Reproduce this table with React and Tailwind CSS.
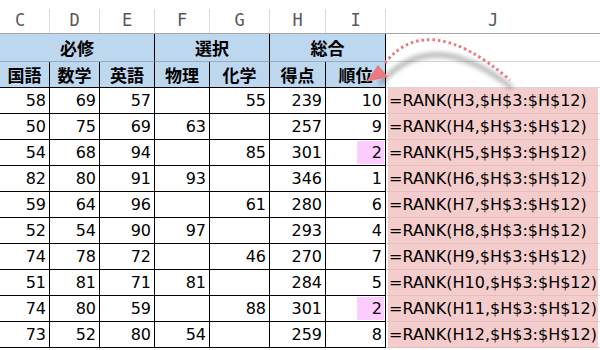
import React from 'react';

const widths = [50, 50, 55, 55, 60, 56, 60];
const letters = ['C', 'D', 'E', 'F', 'G', 'H', 'I'];
const subjects = ['国語', '数学', '英語', '物理', '化学', '得点', '順位'];

const rows = [
  [58, 69, 57, '', 55, 239, 10],
  [50, 75, 69, 63, '', 257, 9],
  [54, 68, 94, '', 85, 301, 2],
  [82, 80, 91, 93, '', 346, 1],
  [59, 64, 96, '', 61, 280, 6],
  [52, 54, 90, 97, '', 293, 4],
  [74, 78, 72, '', 46, 270, 7],
  [51, 81, 71, 81, '', 284, 5],
  [74, 80, 59, '', 88, 301, 2],
  [73, 52, 80, 54, '', 259, 8],
];

const jp = { fontFamily: '"Noto Sans CJK JP", "Noto Sans", sans-serif' };
const num = { fontFamily: '"DejaVu Sans", Verdana, sans-serif' };
const mono = { fontFamily: '"DejaVu Sans Mono", monospace' };

// pink block in column J with its own gridline
const JCell = ({ children }) => (
  <div className="flex flex-1 h-full">
    <div className="w-[2px] border-b border-[#d9d9d9]" />
    <div
      className="w-[210px] flex items-center whitespace-nowrap text-[16px] leading-none text-black pl-px bg-[#f4cccc] border-b border-[#e2c0c0]"
      style={num}
    >
      {children}
    </div>
    <div className="flex-1 border-b border-[#d9d9d9]" />
  </div>
);

export default function App() {
  return (
    <div className="relative w-[600px] h-[350px] bg-white overflow-hidden">
      {/* column letters */}
      <div className="flex h-[34px] border-b border-[#a6a6a6]">
        {letters.map((l, i) => (
          <div key={l} className="flex h-full" style={{ width: widths[i] }}>
            <div
              className={`flex-1 flex items-center justify-center pt-[8px] text-[17px] text-[#595959] ${i === 0 ? 'pr-[9px]' : ''}`}
              style={mono}
            >
              {l}
            </div>
            <div className="w-px mt-[9px] bg-[#d9d9d9]" />
          </div>
        ))}
        <div className="flex-1 flex items-center justify-center pt-[8px] text-[17px] text-[#595959]" style={mono}>
          J
        </div>
      </div>

      {/* group headers */}
      <div className="flex h-[28px] font-bold text-[17px] text-black" style={jp}>
        <div className="w-[155px] flex items-center justify-center bg-[#bdd7ee] border-r border-b border-r-black border-b-[#95abc2]">必修</div>
        <div className="w-[115px] flex items-center justify-center bg-[#bdd7ee] border-r border-b border-r-black border-b-[#95abc2]">選択</div>
        <div className="w-[116px] flex items-center justify-center bg-[#bdd7ee] border-r border-b border-r-black border-b-[#95abc2]">総合</div>
        <div className="flex-1 border-b border-[#d9d9d9]" />
      </div>

      {/* subject headers */}
      <div className="flex h-[26px] font-bold text-[17px] text-black" style={jp}>
        {subjects.map((s, i) => (
          <div
            key={s}
            className="flex items-center justify-center bg-[#bdd7ee] border-r border-b border-black"
            style={{ width: widths[i] }}
          >
            {s}
          </div>
        ))}
        <div className="flex-1 border-b border-[#d9d9d9]" />
      </div>

      {/* data */}
      {rows.map((r, ri) => (
        <div key={ri} className="flex h-[26px]">
          {r.map((v, ci) => {
            const hl = ci === 6 && (ri === 2 || ri === 8);
            return (
              <div
                key={ci}
                className={`flex items-center justify-end border-r border-b border-black text-[16px] leading-none text-black ${hl ? 'pr-px' : 'pr-[3px]'}`}
                style={{ width: widths[ci], ...num }}
              >
                {hl ? (
                  <span className="h-[23px] w-[27px] flex items-center justify-end pr-[2px] bg-[#ffccff]">{v}</span>
                ) : (
                  v
                )}
              </div>
            );
          })}
          <JCell>{`=RANK(H${ri + 3},$H$3:$H$12)`}</JCell>
        </div>
      ))}

      {/* faint grid below the table */}
      <div className="flex h-[2px]">
        {widths.map((w, i) => (
          <div key={i} className="h-full border-r border-[#d9d9d9]" style={{ width: w }} />
        ))}
      </div>

      {/* dotted arrow */}
      <svg className="absolute left-0 top-0 pointer-events-none" width="600" height="350">
        <defs>
          <filter id="sh" x="-20%" y="-50%" width="140%" height="200%">
            <feGaussianBlur stdDeviation="2.5" />
          </filter>
        </defs>
        <path d="M380,84 Q432,24 512,88" fill="none" stroke="#000" strokeOpacity="0.35" strokeWidth="4" filter="url(#sh)" />
        <path d="M385,63 Q428,9 510,80" fill="none" stroke="#ea7a80" strokeWidth="3" strokeDasharray="2.5 3" />
        <polygon points="366,82 378,65 388,77" fill="#ea7a80" />
      </svg>
    </div>
  );
}
